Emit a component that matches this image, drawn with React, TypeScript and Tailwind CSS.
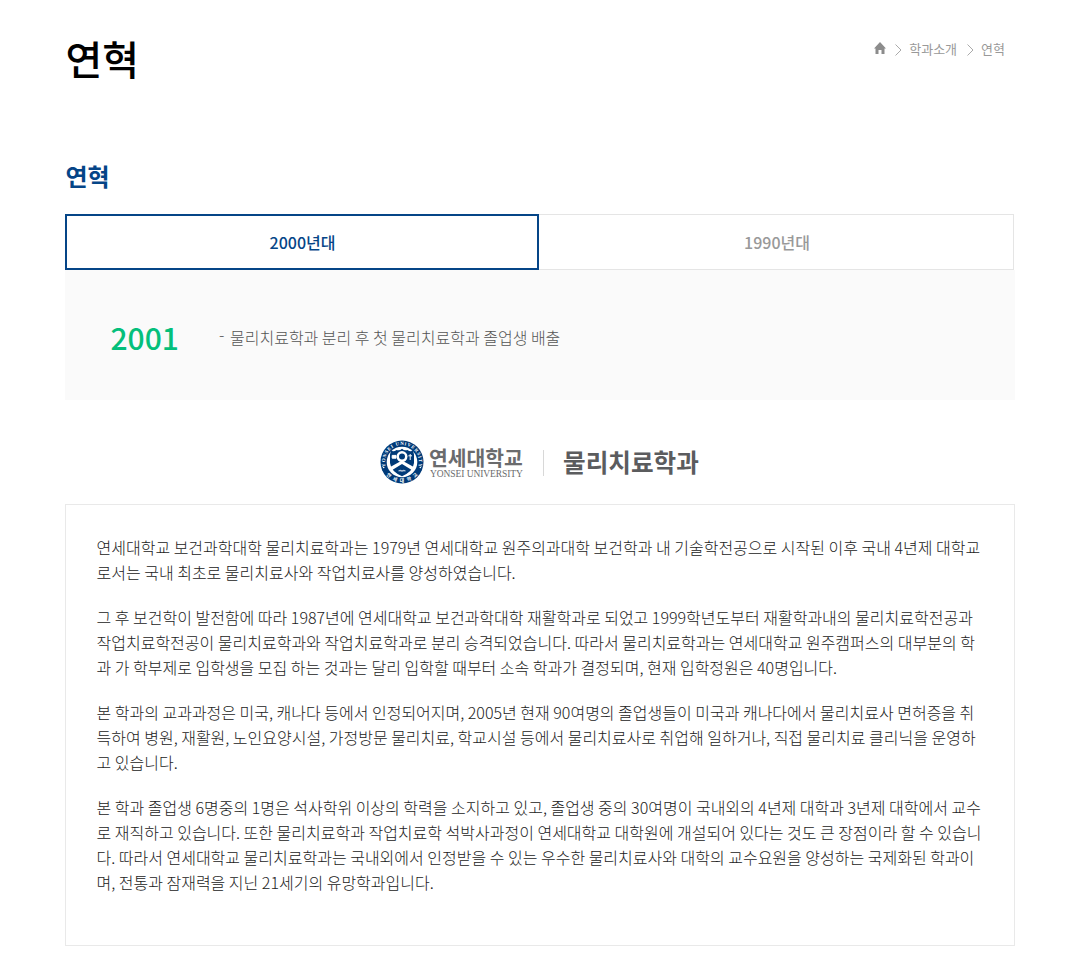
const paragraphs: string[][] = [
  [
    "연세대학교 보건과학대학 물리치료학과는 1979년 연세대학교 원주의과대학 보건학과 내 기술학전공으로 시작된 이후 국내 4년제 대학교",
    "로서는 국내 최초로 물리치료사와 작업치료사를 양성하였습니다.",
  ],
  [
    "그 후 보건학이 발전함에 따라 1987년에 연세대학교 보건과학대학 재활학과로 되었고 1999학년도부터 재활학과내의 물리치료학전공과",
    "작업치료학전공이 물리치료학과와 작업치료학과로 분리 승격되었습니다. 따라서 물리치료학과는 연세대학교 원주캠퍼스의 대부분의 학",
    "과 가 학부제로 입학생을 모집 하는 것과는 달리 입학할 때부터 소속 학과가 결정되며, 현재 입학정원은 40명입니다.",
  ],
  [
    "본 학과의 교과과정은 미국, 캐나다 등에서 인정되어지며, 2005년 현재 90여명의 졸업생들이 미국과 캐나다에서 물리치료사 면허증을 취",
    "득하여 병원, 재활원, 노인요양시설, 가정방문 물리치료, 학교시설 등에서 물리치료사로 취업해 일하거나, 직접 물리치료 클리닉을 운영하",
    "고 있습니다.",
  ],
  [
    "본 학과 졸업생 6명중의 1명은 석사학위 이상의 학력을 소지하고 있고, 졸업생 중의 30여명이 국내외의 4년제 대학과 3년제 대학에서 교수",
    "로 재직하고 있습니다. 또한 물리치료학과 작업치료학 석박사과정이 연세대학교 대학원에 개설되어 있다는 것도 큰 장점이라 할 수 있습니",
    "다. 따라서 연세대학교 물리치료학과는 국내외에서 인정받을 수 있는 우수한 물리치료사와 대학의 교수요원을 양성하는 국제화된 학과이",
    "며, 전통과 잠재력을 지닌 21세기의 유망학과입니다.",
  ],
];

function Chevron() {
  return (
    <svg width="7" height="12" viewBox="0 0 7 12" fill="none" stroke="#aaa" className="mt-0.5 shrink-0">
      <path d="M.5 .5 6 6 .5 11.5" />
    </svg>
  );
}

function Emblem() {
  return (
    <svg width="44" height="44" viewBox="0 0 44 44" className="shrink-0">
      <defs>
        <path id="ring-top" d="M5.8 27.2A17 17 0 1 1 38.2 27.2" />
        <path id="ring-bottom" d="M4 31.5A20.4 20.4 0 0 0 40 31.5" />
      </defs>
      <circle cx="22" cy="22" r="21.5" fill="#003a78" />
      <circle cx="22" cy="22" r="15.3" fill="#fff" />
      <text fill="#fff" fontSize="4.9" fontFamily="Liberation Serif, serif" fontWeight="700">
        <textPath href="#ring-top" startOffset="50%" textAnchor="middle" textLength="62">YONSEI UNIVERSITY</textPath>
      </text>
      <text fill="#fff" fontSize="4.8" fontFamily="Noto Sans CJK KR, sans-serif" fontWeight="700">
        <textPath href="#ring-bottom" startOffset="50%" textAnchor="middle" textLength="36">연세대학교</textPath>
      </text>
      <circle cx="3.7" cy="27.5" r=".8" fill="#fff" />
      <circle cx="40.3" cy="27.5" r=".8" fill="#fff" />
      <path d="M11 10.8Q14 12 16.5 10Q19.5 11 22 8.8Q24.5 11 27.5 10Q30 12 33 10.8L34 14.5V23Q33 31.5 22 36.2Q11 31.5 10 23V14.5Z" fill="#003a78" />
      <path d="M10.2 27 22 20.6 33.8 27 32.2 30.2 22 24 11.8 30.2Z" fill="#fff" />
      <circle cx="22" cy="16.6" r="5.5" fill="#fff" />
      <circle cx="22" cy="16.6" r="3" fill="#003a78" />
      <path d="M12.2 15.4H16V18.2H12.2ZM30.2 14V20M28.4 15.8H32" stroke="#fff" strokeWidth="1" fill="#fff" />
      <path d="M18.5 30.2Q20.5 29.4 22 30.2Q23.5 29.4 25.5 30.2V31.6Q23.5 31 22 31.8Q20.5 31 18.5 31.6Z" fill="#fff" opacity=".7" />
    </svg>
  );
}

export default function App() {
  return (
    <main className="min-h-[963px] bg-white pl-[65px] pt-7 font-['Noto_Sans_CJK_KR',sans-serif]">
      <div className="w-[950px]">
        <header className="flex h-[60px] justify-between">
          <h1 className="pl-[0.5px] text-[40px] font-medium leading-[60px] text-black">연혁</h1>
          <nav className="mr-[10px] flex h-10 items-center pt-px text-[13px] text-[#999]">
            <svg width="12" height="12" viewBox="0 0 12 12" fill="#8c8c8c" className="mb-px mr-[9px]">
              <path d="M6 0 12 6.5H10.5V12H7.5V8H4.5V12H1.5V6.5H0Z" />
            </svg>
            <Chevron />
            <span className="ml-[7px] mr-[10px]">학과소개</span>
            <Chevron />
            <span className="ml-[7px]">연혁</span>
          </nav>
        </header>

        <h2 className="mt-[70px] pl-[0.5px] text-2xl font-bold leading-9 text-[#054587]">연혁</h2>

        <div className="mt-5 flex h-14 text-base font-medium">
          <button className="w-[474px] border-2 border-[#054587] pl-px text-[#054587]">2000년대</button>
          <button className="w-[475px] border border-l-0 border-[#e5e5e5] pl-0.5 text-[#999]">1990년대</button>
        </div>

        <section className="flex h-[130px] bg-[#fafafa] pl-[45px] pt-11">
          <strong className="w-[109px] pl-[0.5px] text-[30px] font-medium leading-[46px] text-[#04bf7b]">2001</strong>
          <p className="flex text-base font-light leading-[46px] text-[#555]">
            <span className="-mt-[3px] w-[11px]">-</span>
            물리치료학과 분리 후 첫 물리치료학과 졸업생 배출
          </p>
        </section>

        <div className="mt-10 flex h-11 pl-[315px]">
          <Emblem />
          <div className="ml-[5px] w-[94px] pt-[5px] text-[#6a6b6d]">
            <div className="whitespace-nowrap text-[20.4px] font-bold leading-6">연세대학교</div>
            <div className="whitespace-nowrap pl-px font-['Liberation_Serif',serif] text-[9.5px] leading-[11px] tracking-[-0.08px]">YONSEI UNIVERSITY</div>
          </div>
          <div className="ml-5 mt-2.5 h-[26px] w-px bg-[#d8d8d8]" />
          <div className="ml-[19px] whitespace-nowrap text-[24.6px] font-bold leading-[43px] text-[#5b5c5e]">물리치료학과</div>
        </div>

        <article className="mt-5 h-[442px] border border-[#e9e9e9] pl-[30.5px] pt-[30px] text-base font-light leading-[25px] text-[#222]">
          {paragraphs.map((lines, i) => (
            <p key={i} className="mb-5">
              {lines.map((line) => (
                <span key={line} className="block whitespace-nowrap">{line}</span>
              ))}
            </p>
          ))}
        </article>
      </div>
    </main>
  );
}
